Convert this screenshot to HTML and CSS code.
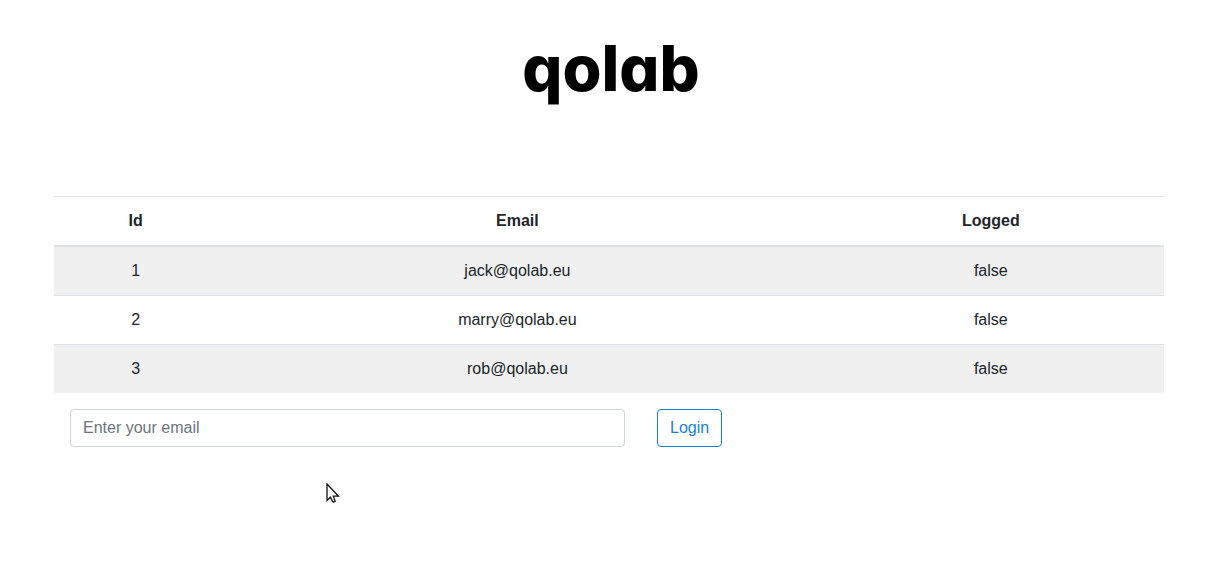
FILE: index.html
```html
<!DOCTYPE html>
<html lang="en">
<head>
<meta charset="utf-8">
<meta name="viewport" content="width=device-width, initial-scale=1">
<title>qolab</title>
<link rel="stylesheet" href="styles.css">
</head>
<body>
<header class="header"><h1 class="logo">qolab</h1></header>
<main class="container">
  <table class="table">
    <thead>
      <tr><th class="col-id" scope="col">Id</th><th class="col-email" scope="col">Email</th><th scope="col">Logged</th></tr>
    </thead>
    <tbody>
      <tr><td>1</td><td>jack@qolab.eu</td><td>false</td></tr>
      <tr><td>2</td><td>marry@qolab.eu</td><td>false</td></tr>
      <tr><td>3</td><td>rob@qolab.eu</td><td>false</td></tr>
    </tbody>
  </table>
  <form class="login">
    <input class="login-email" type="email" placeholder="Enter your email" aria-label="Enter your email">
    <button class="login-button" type="button">Login</button>
  </form>
</main>
<svg class="pointer" width="14" height="21" viewBox="0 0 14 21" aria-hidden="true">
  <path d="M1 1V17.500L4.500 14.200L6.500 18.500Q7.600 19.600 9.200 18.300L7.300 13.200H12.500Z" fill="#fff" stroke="#111" stroke-width="1.300"/>
</svg>
</body>
</html>
```
FILE: styles.css
```css
*, *::before, *::after { box-sizing: border-box; }

body {
  margin: 0;
  padding-left: 1px;
  background: #fff;
  color: #212529;
  font: 16px/24px "Liberation Sans", Arial, sans-serif;
}

.header {
  padding: 20px 16px 80px 20px;
  text-align: center;
}

.logo {
  margin: 0;
  color: #000;
  font: 800 63px/96px Inter, sans-serif;
  font-feature-settings: "cv11";
}

.container {
  max-width: 1110px;
  margin: 0 auto;
}

.table {
  width: 100%;
  margin-bottom: 16px;
  border-collapse: collapse;
  text-align: center;
}

.table th,
.table td {
  padding: 12px;
  border-top: 1px solid #dee2e6;
}

.table thead th { border-bottom: 2px solid #dee2e6; }

.col-id { width: 14.7%; }
.col-email { width: 54.1%; }

.table tbody tr:nth-child(odd) { background: #f0f0f0; }

.login {
  display: flex;
  gap: 32px;
  padding-left: 16px;
}

.login-email {
  flex: 0 1 555px;
  min-width: 0;
  height: 38px;
  padding: 6px 12px;
  border: 1px solid #ced4da;
  border-radius: 4px;
  background: #fff;
  color: #495057;
  font: inherit;
}

.login-email::placeholder { color: #6c757d; opacity: 1; }

.login-button {
  padding: 6px 12px;
  border: 1px solid #1680d0;
  border-radius: 4px;
  background: #fff;
  color: #1680d8;
  font: inherit;
}

.pointer {
  position: absolute;
  top: 483px;
  left: 326px;
}
```
